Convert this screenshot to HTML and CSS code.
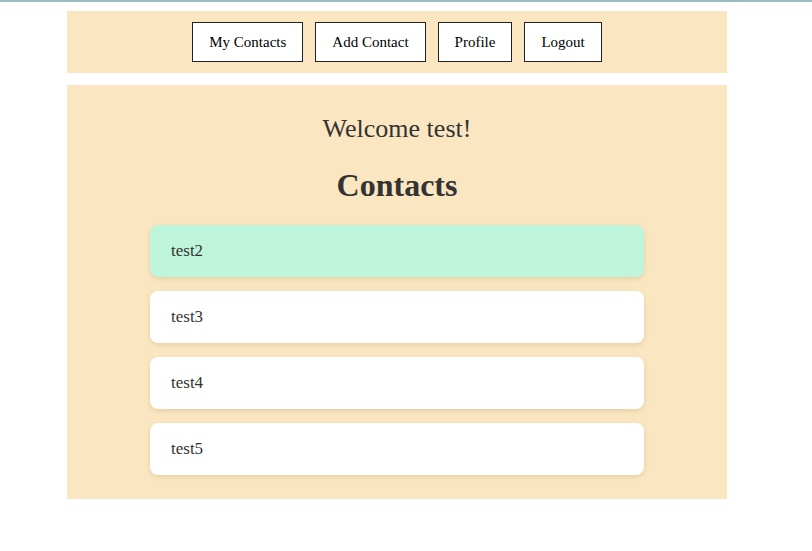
FILE: index.html
```html
<!DOCTYPE html>
<html>
<head>
<meta charset="utf-8">
<link rel="stylesheet" href="styles.css">
</head>
<body>
<div class="page">
  <nav class="nav">
    <button class="nav-btn">My Contacts</button>
    <button class="nav-btn">Add Contact</button>
    <button class="nav-btn">Profile</button>
    <button class="nav-btn">Logout</button>
  </nav>
  <main class="main">
    <p class="welcome">Welcome test!</p>
    <h1 class="title">Contacts</h1>
    <ul class="list">
      <li class="card card-active">test2</li>
      <li class="card">test3</li>
      <li class="card">test4</li>
      <li class="card">test5</li>
    </ul>
  </main>
</div>
</body>
</html>
```
FILE: styles.css
```css
html, body {
  margin: 0;
  padding: 0;
  background: #ffffff;
}
body {
  border-top: 2px solid #9cbcc3;
  font-family: "Liberation Serif", "Times New Roman", serif;
  color: #333333;
}
.page {
  width: 660px;
  margin: 9px 0 0 67px;
}
.nav {
  background: #fae7c2;
  height: 62px;
  display: flex;
  justify-content: center;
  align-items: center;
  gap: 12px;
}
.nav-btn {
  height: 40px;
  padding: 0 16px;
  background: #ffffff;
  border: 1px solid #222222;
  font-family: "Liberation Serif", "Times New Roman", serif;
  font-size: 15px;
  color: #000000;
}
.main {
  margin-top: 12px;
  background: #fae7c2;
  padding: 28px 0 24px;
  display: flex;
  flex-direction: column;
  align-items: center;
}
.welcome {
  margin: 0;
  font-size: 26px;
  line-height: 32px;
}
.title {
  margin: 20px 0 0;
  font-size: 32px;
  line-height: 40px;
  font-weight: bold;
}
.list {
  list-style: none;
  margin: 20px 0 0;
  padding: 0;
  width: 494px;
  display: flex;
  flex-direction: column;
  gap: 14px;
}
.card {
  background: #ffffff;
  border-radius: 8px;
  height: 52px;
  padding: 0 21px;
  display: flex;
  align-items: center;
  font-size: 17px;
  box-shadow: 0 2px 5px rgba(190, 160, 110, 0.35);
}
.card-active {
  background: #bff5db;
}
```
